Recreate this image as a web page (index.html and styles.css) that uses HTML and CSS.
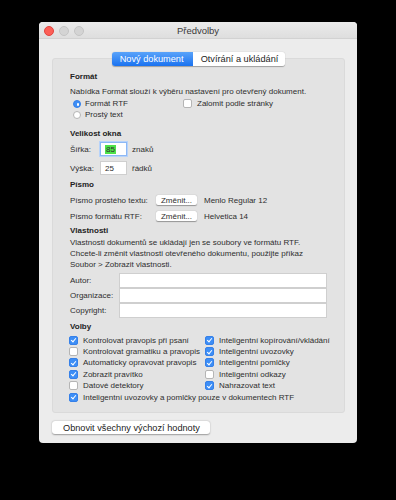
FILE: index.html
```html
<!DOCTYPE html>
<html lang="cs">

<head>
  <meta charset="UTF-8">
  <meta name="viewport" content="width=device-width, initial-scale=1.0">
  <title>Předvolby</title>
  <link rel="stylesheet" href="styles.css">
</head>

<body>
  <div class="window">
    <div class="titlebar">
      <div class="lights">
        <span class="light red"></span>
        <span class="light"></span>
        <span class="light"></span>
      </div>
      <div class="title">Předvolby</div>
    </div>

    <div class="content">
      <div class="tabs">
        <div class="tab active">Nový dokument</div>
        <div class="tab">Otvírání a ukládání</div>
      </div>

      <div class="group">
        <div class="heading">Formát</div>
        <div class="line note">Nabídka Formát slouží k výběru nastavení pro otevřený dokument.</div>
        <div class="format-rows">
          <div class="opt"><span class="radio on"></span>Formát RTF</div>
          <div class="opt"><span class="check"></span>Zalomit podle stránky</div>
          <div class="opt"><span class="radio"></span>Prostý text</div>
        </div>

        <div class="heading h-size">Velikost okna</div>
        <div class="size-row">
          <span class="lbl-small">Šířka:</span>
          <span class="num focus"><span class="sel">85</span></span>
          <span>znaků</span>
        </div>
        <div class="size-row second">
          <span class="lbl-small">Výška:</span>
          <span class="num">25</span>
          <span>řádků</span>
        </div>

        <div class="heading h-font">Písmo</div>
        <div class="font-row">
          <span class="lbl-font">Písmo prostého textu:</span>
          <span class="btn-small">Změnit...</span>
          <span>Menlo Regular 12</span>
        </div>
        <div class="font-row second">
          <span class="lbl-font">Písmo formátu RTF:</span>
          <span class="btn-small">Změnit...</span>
          <span>Helvetica 14</span>
        </div>

        <div class="heading h-props">Vlastnosti</div>
        <div class="para">
          Vlastnosti dokumentů se ukládají jen se soubory ve formátu RTF.<br>
          Chcete-li změnit vlastnosti otevřeného dokumentu, použijte příkaz<br>
          Soubor &gt; Zobrazit vlastnosti.
        </div>
        <div class="fields">
          <span class="lbl-field">Autor:</span><span class="field"></span>
          <span class="lbl-field">Organizace:</span><span class="field"></span>
          <span class="lbl-field">Copyright:</span><span class="field"></span>
        </div>

        <div class="heading h-opts">Volby</div>
        <div class="options">
          <div class="opt"><span class="check on"></span>Kontrolovat pravopis při psaní</div>
          <div class="opt"><span class="check on"></span>Inteligentní kopírování/vkládání</div>
          <div class="opt"><span class="check"></span>Kontrolovat gramatiku a pravopis</div>
          <div class="opt"><span class="check on"></span>Inteligentní uvozovky</div>
          <div class="opt"><span class="check on"></span>Automaticky opravovat pravopis</div>
          <div class="opt"><span class="check on"></span>Inteligentní pomlčky</div>
          <div class="opt"><span class="check on"></span>Zobrazit pravítko</div>
          <div class="opt"><span class="check"></span>Inteligentní odkazy</div>
          <div class="opt"><span class="check"></span>Datové detektory</div>
          <div class="opt"><span class="check on"></span>Nahrazovat text</div>
          <div class="opt wide"><span class="check on"></span>Inteligentní uvozovky a pomlčky pouze v dokumentech RTF</div>
        </div>
      </div>

      <div class="footer">
        <span class="btn">Obnovit všechny výchozí hodnoty</span>
      </div>
    </div>
  </div>
</body>

</html>
```

FILE: styles.css
```css
body {
  margin: 0;
  background: #000;
  font-family: "Liberation Sans", Arial, sans-serif;
  font-size: 8px;
  color: #2e2e2e;
  height: 500px;
  overflow: hidden;
}

.window {
  margin: 22px 0 0 39px;
  width: 318px;
  height: 421px;
  background: #ececec;
  border-radius: 4px;
  overflow: hidden;
}

.titlebar {
  height: 16px;
  position: relative;
  background: linear-gradient(#ebebeb, #dedede);
  border-bottom: 1px solid #d2d2d2;
  display: flex;
  align-items: center;
  justify-content: center;
}

.lights {
  position: absolute;
  left: 5px;
  top: 4px;
  display: flex;
  gap: 5px;
}

.light {
  width: 8px;
  height: 8px;
  border-radius: 50%;
  background: #d4d4d4;
  border: 0.5px solid #c4c4c4;
}

.light.red {
  background: #fc5f57;
  border-color: #e0443e;
}

.title {
  font-size: 9.5px;
  color: #3a3a3a;
}

.content {
  padding: 0 12px 0 13px;
  display: flex;
  flex-direction: column;
}

.tabs {
  align-self: center;
  display: flex;
  margin-top: 13px;
  margin-bottom: -8px;
  height: 14px;
  position: relative;
  z-index: 1;
  border-radius: 3px;
  box-shadow: 0 0.5px 1px rgba(0, 0, 0, 0.3);
  font-size: 9.2px;
}

.tab {
  display: flex;
  align-items: center;
  padding: 0 7px 0 8px;
  background: #fff;
  color: #222;
  border-radius: 0 3px 3px 0;
}

.tab.active {
  background: linear-gradient(#5aa3fa, #1a72f0);
  color: #fff;
  border-radius: 3px 0 0 3px;
  width: 65px;
  padding: 0 8px;
}

.group {
  box-sizing: border-box;
  background: #e3e3e3;
  border: 1px solid #dadada;
  border-radius: 3px;
  height: 355px;
  padding: 12px 0 0 17px;
  display: flex;
  flex-direction: column;
}

.heading {
  font-weight: bold;
  height: 12px;
  line-height: 12px;
  color: #222;
}

.note {
  margin-top: 3px;
  height: 12px;
  line-height: 12px;
}

.format-rows {
  display: grid;
  grid-template-columns: 113px auto;
  grid-auto-rows: 11px;
}

.opt {
  display: flex;
  align-items: center;
  white-space: nowrap;
}

.radio {
  width: 8px;
  height: 8px;
  border-radius: 50%;
  background: #fff;
  border: 0.5px solid #b5b5b5;
  margin: 0 4px 0 3px;
  box-sizing: border-box;
}

.radio.on {
  background: #3d8ef6;
  border-color: #3680e8;
  position: relative;
}

.radio.on::after {
  content: "";
  position: absolute;
  left: 2.5px;
  top: 2.5px;
  width: 2.5px;
  height: 2.5px;
  border-radius: 50%;
  background: #fff;
}

.check {
  width: 7px;
  height: 7px;
  border-radius: 2px;
  background: #fff;
  border: 0.5px solid #b5b5b5;
  margin-right: 5px;
  position: relative;
  flex: none;
}

.check.on {
  background: #3d8ef6;
  border-color: #3680e8;
}

.check.on::after {
  content: "";
  position: absolute;
  left: 2.3px;
  top: 0.6px;
  width: 2px;
  height: 4px;
  border: solid #fff;
  border-width: 0 1.2px 1.2px 0;
  transform: rotate(40deg);
}

.h-size {
  margin-top: 8px;
}

.size-row {
  display: flex;
  align-items: center;
  height: 14px;
  margin-top: 2px;
}

.size-row.second {
  margin-top: 5px;
}

.lbl-small {
  width: 30px;
}

.num {
  width: 27px;
  height: 14px;
  box-sizing: border-box;
  background: #fff;
  border: 1px solid #cfcfcf;
  padding-left: 4px;
  display: flex;
  align-items: center;
  margin-right: 5px;
}

.num.focus {
  border: 1px solid #8db8f5;
  box-shadow: 0 0 0 1px #b7d3fa;
}

.sel {
  background: #4ee24a;
  padding: 0 1px;
}

.h-font {
  margin-top: 4px;
}

.font-row {
  display: flex;
  align-items: center;
  height: 12px;
  margin-top: 3px;
}

.font-row.second {
  margin-top: 4px;
}

.lbl-font {
  width: 86px;
}

.btn-small {
  width: 41px;
  height: 10px;
  box-sizing: border-box;
  background: #fff;
  border-radius: 2px;
  box-shadow: 0 0.5px 1px rgba(0, 0, 0, 0.35);
  display: flex;
  align-items: center;
  justify-content: center;
  margin-right: 7px;
}

.h-props {
  margin-top: 3px;
}

.para {
  line-height: 11px;
}

.fields {
  display: grid;
  grid-template-columns: 49px 208px;
  grid-auto-rows: 14px;
  row-gap: 1px;
  margin-top: 3px;
  align-items: center;
}

.field {
  height: 13px;
  background: #fff;
  border: 0.5px solid #cfcfcf;
}

.h-opts {
  margin-top: 4px;
}

.options {
  display: grid;
  grid-template-columns: 136px auto;
  grid-auto-rows: 11.4px;
  margin-top: 1.5px;
  margin-left: -1px;
}

.options .wide {
  grid-column: 1 / 3;
}

.footer {
  padding-top: 8px;
}

.btn {
  display: inline-flex;
  align-items: center;
  height: 13px;
  padding: 0 10px 0 11px;
  background: #fff;
  border-radius: 3px;
  box-shadow: 0 0.5px 1.5px rgba(0, 0, 0, 0.35);
  font-size: 9.2px;
  color: #222;
}
```
